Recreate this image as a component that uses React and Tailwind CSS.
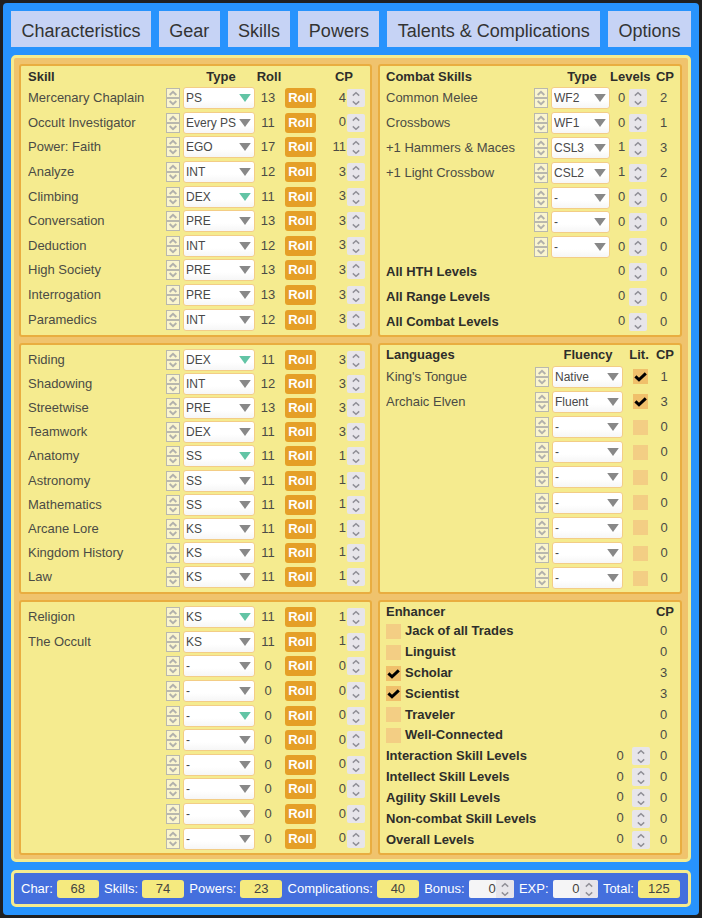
import React from "react";

const tabs = ["Characteristics", "Gear", "Skills", "Powers", "Talents & Complications", "Options"];

const skillTypes = ["-", "INT", "DEX", "EGO", "PRE", "PS", "Every PS", "KS", "SS"];
const combatTypes = ["-", "WF1", "WF2", "CSL2", "CSL3"];
const fluencyTypes = ["-", "Basic", "Fluent", "Accent", "Native"];

// [name, type, roll, cp, highlighted arrow]
const skillsA = [
  ["Mercenary Chaplain", "PS", 13, 4, true],
  ["Occult Investigator", "Every PS", 11, 0],
  ["Power: Faith", "EGO", 17, 11],
  ["Analyze", "INT", 12, 3],
  ["Climbing", "DEX", 11, 3, true],
  ["Conversation", "PRE", 13, 3],
  ["Deduction", "INT", 12, 3],
  ["High Society", "PRE", 13, 3],
  ["Interrogation", "PRE", 13, 3],
  ["Paramedics", "INT", 12, 3],
];

const skillsB = [
  ["Riding", "DEX", 11, 3, true],
  ["Shadowing", "INT", 12, 3],
  ["Streetwise", "PRE", 13, 3],
  ["Teamwork", "DEX", 11, 3],
  ["Anatomy", "SS", 11, 1, true],
  ["Astronomy", "SS", 11, 1],
  ["Mathematics", "SS", 11, 1],
  ["Arcane Lore", "KS", 11, 1],
  ["Kingdom History", "KS", 11, 1],
  ["Law", "KS", 11, 1],
];

const skillsC = [
  ["Religion", "KS", 11, 1, true],
  ["The Occult", "KS", 11, 1],
  ["", "-", 0, 0],
  ["", "-", 0, 0],
  ["", "-", 0, 0, true],
  ["", "-", 0, 0],
  ["", "-", 0, 0],
  ["", "-", 0, 0],
  ["", "-", 0, 0],
  ["", "-", 0, 0],
];

const combat = [
  ["Common Melee", "WF2", 0, 2],
  ["Crossbows", "WF1", 0, 1],
  ["+1 Hammers & Maces", "CSL3", 1, 3],
  ["+1 Light Crossbow", "CSL2", 1, 2],
  ["", "-", 0, 0],
  ["", "-", 0, 0],
  ["", "-", 0, 0],
];

const combatLevels = ["All HTH Levels", "All Range Levels", "All Combat Levels"];

const languages = [
  ["King's Tongue", "Native", true, 1],
  ["Archaic Elven", "Fluent", true, 3],
  ["", "-", false, 0],
  ["", "-", false, 0],
  ["", "-", false, 0],
  ["", "-", false, 0],
  ["", "-", false, 0],
  ["", "-", false, 0],
  ["", "-", false, 0],
];

const enhancers = [
  ["Jack of all Trades", false, 0],
  ["Linguist", false, 0],
  ["Scholar", true, 3],
  ["Scientist", true, 3],
  ["Traveler", false, 0],
  ["Well-Connected", false, 0],
];

const enhancerLevels = [
  "Interaction Skill Levels",
  "Intellect Skill Levels",
  "Agility Skill Levels",
  "Non-combat Skill Levels",
  "Overall Levels",
];

function Mover() {
  return (
    <span className="flex w-[14px] shrink-0 flex-col">
      {["Move up", "Move down"].map((label, i) => (
        <button
          key={label}
          type="button"
          aria-label={label}
          className="flex h-[10px] items-center justify-center border border-[#b9b8ae] bg-[#faf5cf]"
        >
          <svg width="8" height="6" viewBox="0 0 8 6" fill="none" stroke="#b2b1ac" strokeWidth="2">
            <path d={i === 0 ? "M0.6 5 L4 1.8 L7.4 5" : "M0.6 1 L4 4.2 L7.4 1"} />
          </svg>
        </button>
      ))}
    </span>
  );
}

function Stepper({ className = "" }) {
  return (
    <span className={`flex w-[18px] shrink-0 flex-col overflow-hidden rounded-[2px] bg-[#e7e5ea] ${className}`}>
      <button type="button" aria-label="Increase" className="h-[9px]">
        <svg className="block" width="18" height="9" viewBox="0 0 18 9" fill="none" stroke="#8f8e96" strokeWidth="1.4">
          <path d="M5.8 6.6 L9 3.8 L12.2 6.6" />
        </svg>
      </button>
      <button type="button" aria-label="Decrease" className="h-[9px]">
        <svg className="block" width="18" height="9" viewBox="0 0 18 9" fill="none" stroke="#8f8e96" strokeWidth="1.4">
          <path d="M5.8 3.4 L9 6.2 L12.2 3.4" />
        </svg>
      </button>
    </span>
  );
}

function Picker({ label, value, options, width, accent }) {
  return (
    <span className={`relative ml-[3px] block shrink-0 ${width}`}>
      <select
        aria-label={label}
        defaultValue={value}
        className="block h-[22px] w-full appearance-none rounded-[3px] border border-[#f3cd86] bg-linear-to-b from-white from-60% to-[#f6f6f6] pl-[2px] text-[12px] text-[#484848]"
      >
        {options.map((o) => (
          <option key={o}>{o}</option>
        ))}
      </select>
      <svg
        className={`pointer-events-none absolute top-[7px] right-[4px] ${accent ? "text-[#62c4a5]" : "text-[#888888]"}`}
        width="12"
        height="8"
        viewBox="0 0 12 8"
        fill="currentColor"
      >
        <path d="M0.2 0 H11.8 L6 8 Z" />
      </svg>
    </span>
  );
}

function Tick({ id, label, checked }) {
  return (
    <span className="relative block size-[15px] shrink-0">
      <input
        id={id}
        type="checkbox"
        aria-label={label}
        defaultChecked={checked}
        className="peer block size-[15px] appearance-none bg-[#f3ce84] checked:bg-[#f0c06b]"
      />
      <svg
        className="pointer-events-none absolute inset-0 hidden peer-checked:block"
        width="15"
        height="15"
        viewBox="0 0 15 15"
        fill="none"
        stroke="#000"
        strokeWidth="3"
      >
        <path d="M2.4 7.4 L6 10.8 L12.8 4.4" />
      </svg>
    </span>
  );
}

function NumberBox({ label, value, className }) {
  return (
    <input
      type="text"
      inputMode="numeric"
      aria-label={label}
      defaultValue={value}
      className={`h-[18px] min-w-0 shrink-0 bg-transparent pb-[2px] ${className}`}
    />
  );
}

function Panel({ className, children }) {
  return (
    <section className={`flex flex-col rounded-[3px] border-2 border-[#e9ad40] bg-[#f5eb8f] ${className}`}>
      {children}
    </section>
  );
}

const tableClass = "flex flex-1 flex-col";
const bodyClass = "flex flex-1 flex-col";
const rowClass = "flex flex-1 items-center";
const headRow = "flex h-[18px] items-center font-bold text-[#2e2e2b]";

function SkillTable({ rows, head }) {
  return (
    <table className={tableClass}>
      {head && (
        <thead className="block">
          <tr className={headRow}>
            <th className="flex-1 text-left">Skill</th>
            <th className="w-[70px]">Type</th>
            <th className="w-[26px]">Roll</th>
            <th className="w-[83px] pr-[12px] text-right">CP</th>
          </tr>
        </thead>
      )}
      <tbody className={bodyClass}>
        {rows.map(([name, type, roll, cp, accent], i) => (
          <tr key={i} className={rowClass}>
            <td className="flex-1 truncate">{name}</td>
            <td className="flex items-center">
              <Mover />
              <Picker label={`${name} type`} value={type} options={skillTypes} width="w-[72px]" accent={accent} />
            </td>
            <td className="w-[26px] text-center">{roll}</td>
            <td className="ml-1">
              <button
                type="button"
                className="block h-5 w-[31px] rounded-[3px] bg-[#e59f27] text-center leading-5 font-bold text-white"
              >
                Roll
              </button>
            </td>
            <td className="flex items-center">
              <NumberBox label={`${name} CP`} value={cp} className="w-[31px] pr-px text-right" />
              <Stepper />
            </td>
          </tr>
        ))}
      </tbody>
    </table>
  );
}

function CombatTable() {
  return (
    <table className={tableClass}>
      <thead className="block">
        <tr className={headRow}>
          <th className="flex-1 text-left">Combat Skills</th>
          <th className="w-[56px]">Type</th>
          <th className="w-[40px]">Levels</th>
          <th className="w-[30px]">CP</th>
        </tr>
      </thead>
      <tbody className={bodyClass}>
        {combat.map(([name, type, levels, cp], i) => (
          <tr key={i} className={rowClass}>
            <td className="flex-1 truncate">{name}</td>
            <td className="flex items-center">
              <Mover />
              <Picker label={`${name} type`} value={type} options={combatTypes} width="w-[59px]" />
            </td>
            <td className="flex items-center">
              <NumberBox label={`${name} levels`} value={levels} className="w-[19px] pl-1 text-center" />
              <Stepper />
            </td>
            <td className="w-[33px] text-center">{cp}</td>
          </tr>
        ))}
        {combatLevels.map((name) => (
          <tr key={name} className={rowClass}>
            <th className="flex-1 text-left text-[#2e2e2b]">{name}</th>
            <td className="flex items-center">
              <NumberBox label={name} value={0} className="w-[19px] pl-1 text-center" />
              <Stepper />
            </td>
            <td className="w-[33px] text-center">0</td>
          </tr>
        ))}
      </tbody>
    </table>
  );
}

function LanguageTable() {
  return (
    <table className={tableClass}>
      <thead className="block">
        <tr className={headRow}>
          <th className="flex-1 text-left">Languages</th>
          <th className="w-[80px]">Fluency</th>
          <th className="w-[22px]">Lit.</th>
          <th className="w-[30px]">CP</th>
        </tr>
      </thead>
      <tbody className={bodyClass}>
        {languages.map(([name, fluency, literate, cp], i) => (
          <tr key={i} className={rowClass}>
            <td className="flex-1 truncate">{name}</td>
            <td className="flex items-center">
              <Mover />
              <Picker label={`${name} fluency`} value={fluency} options={fluencyTypes} width="w-[71px]" />
            </td>
            <td className="flex w-[25px] justify-end">
              <Tick id={`lit-${i}`} label={`${name} literacy`} checked={literate} />
            </td>
            <td className="w-[32px] text-center">{cp}</td>
          </tr>
        ))}
      </tbody>
    </table>
  );
}

function EnhancerTable() {
  return (
    <table className={tableClass}>
      <thead className="block">
        <tr className={headRow}>
          <th className="flex-1 text-left">Enhancer</th>
          <th className="w-[30px]">CP</th>
        </tr>
      </thead>
      <tbody className={bodyClass}>
        {enhancers.map(([name, checked, cp], i) => (
          <tr key={name} className={rowClass}>
            <th className="flex flex-1 items-center gap-1 text-left text-[#2e2e2b]">
              <Tick id={`enhancer-${i}`} label={name} checked={checked} />
              <label htmlFor={`enhancer-${i}`}>{name}</label>
            </th>
            <td className="w-[33px] text-center">{cp}</td>
          </tr>
        ))}
        {enhancerLevels.map((name) => (
          <tr key={name} className={rowClass}>
            <th className="flex-1 text-left text-[#2e2e2b]">{name}</th>
            <td className="flex items-center">
              <NumberBox label={name} value={0} className="w-[24px] text-center" />
              <Stepper />
            </td>
            <td className="w-[30px] pr-[3px] text-center">0</td>
          </tr>
        ))}
      </tbody>
    </table>
  );
}

function Total({ id, label, value }) {
  return (
    <div className="flex items-center gap-1">
      <label htmlFor={id}>{label}</label>
      <input
        id={id}
        readOnly
        defaultValue={value}
        className="h-[18px] w-[42px] rounded-[3px] bg-[#f5ea7f] text-center text-[#45453f]"
      />
    </div>
  );
}

function Adjustable({ id, label }) {
  return (
    <div className="flex items-center gap-1">
      <label htmlFor={id}>{label}</label>
      <span className="flex overflow-hidden rounded-[2px] bg-[#f5f5f6]">
        <input id={id} defaultValue="0" className="h-[18px] w-[27px] text-right text-[#45453f]" />
        <Stepper className="rounded-none" />
      </span>
    </div>
  );
}

export default function App() {
  return (
    <div className="flex min-h-screen flex-col bg-[#202020] p-[3px] font-['Liberation_Sans',Arial,sans-serif] text-[13px] leading-[16px] text-[#4b4b45]">
      <div className="flex flex-1 flex-col gap-2 rounded-[4px] bg-[#2793fd] p-2">
        <nav className="flex gap-2">
          {tabs.map((tab) => (
            <button
              key={tab}
              type="button"
              className="h-9 flex-auto bg-[#c6d3f5] px-[9px] pt-1 text-lg leading-8 whitespace-nowrap text-[#333333]"
            >
              {tab}
            </button>
          ))}
        </nav>

        <main className="grid flex-1 grid-cols-[353fr_304fr] grid-rows-[273fr_251fr_255fr] gap-[6px] rounded-[5px] border-[3px] border-[#f5eb8f] bg-[#f0c36d] pt-[6px] pr-[6px] pb-1 pl-[5px]">
          <Panel className="pt-[2px] pr-[5px] pb-[3px] pl-[7px]">
            <SkillTable rows={skillsA} head />
          </Panel>
          <Panel className="pt-[2px] pb-px pl-[6px]">
            <CombatTable />
          </Panel>
          <Panel className="py-[3px] pr-[5px] pl-[7px]">
            <SkillTable rows={skillsB} />
          </Panel>
          <Panel className="py-px pl-[6px]">
            <LanguageTable />
          </Panel>
          <Panel className="pt-[3px] pr-[5px] pb-[2px] pl-[7px]">
            <SkillTable rows={skillsC} />
          </Panel>
          <Panel className="pt-px pb-[3px] pl-[6px]">
            <EnhancerTable />
          </Panel>
        </main>

        <footer className="flex h-[37px] items-center justify-between rounded-[5px] border-[3px] border-[#f5eb8f] bg-[#446fdd] pr-2 pl-[7px] text-white">
          <Total id="char" label="Char:" value="68" />
          <Total id="skills" label="Skills:" value="74" />
          <Total id="powers" label="Powers:" value="23" />
          <Total id="complications" label="Complications:" value="40" />
          <Adjustable id="bonus" label="Bonus:" />
          <Adjustable id="exp" label="EXP:" />
          <Total id="total" label="Total:" value="125" />
        </footer>
      </div>
    </div>
  );
}
